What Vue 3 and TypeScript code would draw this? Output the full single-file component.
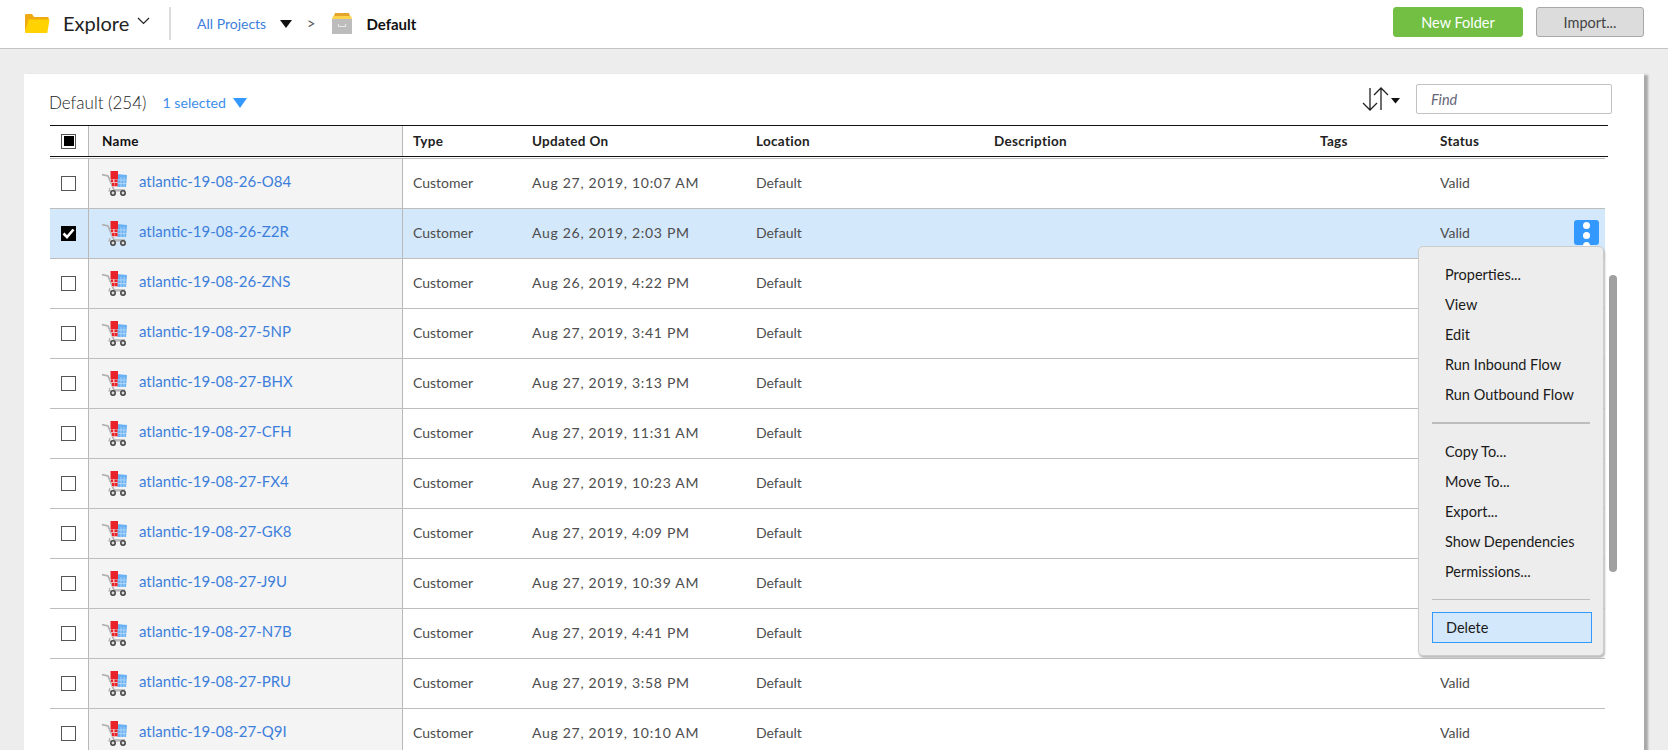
<script setup lang="ts">
interface Row { name: string; updated: string; selected?: boolean; status?: string }
const rows: Row[] = [
  { name: 'atlantic-19-08-26-O84', updated: 'Aug 27, 2019, 10:07 AM', status: 'Valid' },
  { name: 'atlantic-19-08-26-Z2R', updated: 'Aug 26, 2019, 2:03 PM', selected: true, status: 'Valid' },
  { name: 'atlantic-19-08-26-ZNS', updated: 'Aug 26, 2019, 4:22 PM' },
  { name: 'atlantic-19-08-27-5NP', updated: 'Aug 27, 2019, 3:41 PM' },
  { name: 'atlantic-19-08-27-BHX', updated: 'Aug 27, 2019, 3:13 PM' },
  { name: 'atlantic-19-08-27-CFH', updated: 'Aug 27, 2019, 11:31 AM' },
  { name: 'atlantic-19-08-27-FX4', updated: 'Aug 27, 2019, 10:23 AM' },
  { name: 'atlantic-19-08-27-GK8', updated: 'Aug 27, 2019, 4:09 PM' },
  { name: 'atlantic-19-08-27-J9U', updated: 'Aug 27, 2019, 10:39 AM' },
  { name: 'atlantic-19-08-27-N7B', updated: 'Aug 27, 2019, 4:41 PM' },
  { name: 'atlantic-19-08-27-PRU', updated: 'Aug 27, 2019, 3:58 PM', status: 'Valid' },
  { name: 'atlantic-19-08-27-Q9I', updated: 'Aug 27, 2019, 10:10 AM', status: 'Valid' },
]
const menuGroups: string[][] = [
  ['Properties...', 'View', 'Edit', 'Run Inbound Flow', 'Run Outbound Flow'],
  ['Copy To...', 'Move To...', 'Export...', 'Show Dependencies', 'Permissions...'],
]
</script>

<template>
  <div class="page">
    <header class="topbar">
      <svg class="folder" width="26" height="22" viewBox="0 0 26 22">
        <path d="M1 20V3.5C1 2.5 1.6 2 2.5 2H8l2 3h13.5c.8 0 1.2.5 1.2 1.2V8H6z" fill="#eeaa10" />
        <path d="M4.5 7.5H25.5L23.5 20c-.1.7-.6 1-1.2 1H2c-.8 0-1.2-.5-1-1.2z" fill="#ffd200" />
      </svg>
      <span class="explore">Explore</span>
      <svg class="chev" width="13" height="8" viewBox="0 0 13 8"><path d="M1 1l5.5 5.5L12 1" fill="none" stroke="#222" stroke-width="1.2" /></svg>
      <span class="vsep"></span>
      <a class="crumb">All Projects</a>
      <svg class="drop" width="12" height="8" viewBox="0 0 12 8"><path d="M0 0h12L6 8z" fill="#111" /></svg>
      <span class="gt">&gt;</span>
      <svg class="drawer" width="20" height="21" viewBox="0 0 20 21">
        <path d="M3 0h14l1 3H2z" fill="#e3a52c" />
        <path d="M1 3h18l1 3H0z" fill="#fbd44c" />
        <rect x="0" y="6" width="20" height="15" fill="#bcbcbc" />
        <path d="M6.500 11v2.500h7V11" fill="none" stroke="#e6e6e6" stroke-width="1.200" />
      </svg>
      <strong class="current">Default</strong>
      <span class="grow"></span>
      <button class="btn primary">New Folder</button>
      <button class="btn">Import...</button>
    </header>

    <main class="main">
      <section class="panel">
        <div class="toolbar">
          <span class="title">Default (254)</span>
          <a class="selected">1 selected</a>
          <svg class="seltri" width="14" height="10" viewBox="0 0 14 10"><path d="M0 0h14L7 10z" fill="#3399ff" /></svg>
          <span class="grow"></span>
          <svg class="sort" width="38" height="24" viewBox="0 0 38 24">
            <path d="M8 1v22M1 16l7 7 7-7" fill="none" stroke="#222" stroke-width="1.300" />
            <path d="M19 23V1M12 8l7-7 7 7" fill="none" stroke="#222" stroke-width="1.300" />
            <path d="M29 11h9l-4.500 5.500z" fill="#111" />
          </svg>
          <input class="find" placeholder="Find" />
        </div>

        <div class="table">
          <div class="grid head">
            <div class="c-check"><span class="box partial"><i></i></span></div>
            <div class="c-name">Name</div>
            <div class="cell">Type</div>
            <div class="cell">Updated On</div>
            <div class="cell">Location</div>
            <div class="cell">Description</div>
            <div class="cell">Tags</div>
            <div class="cell">Status</div>
          </div>
          <div class="rows">
            <div v-for="r in rows" :key="r.name" class="grid row" :class="{ sel: r.selected }">
              <div class="c-check">
                <span v-if="r.selected" class="box checked">
                  <svg width="13" height="11" viewBox="0 0 13 11"><path d="M1.500 5.500L5 9l6.500-7.500" fill="none" stroke="#fff" stroke-width="2.600" /></svg>
                </span>
                <span v-else class="box"></span>
              </div>
              <div class="c-name">
                <svg class="cart" width="25" height="25" viewBox="0 0 25 25">
                  <path d="M0 3.500l6 1.500 6 14h11" fill="none" stroke="#b0b0b0" stroke-width="1.700" />
                  <path d="M8 17l-1 3h15" fill="none" stroke="#b0b0b0" stroke-width="1.200" />
                  <path d="M15 3l10 1-1 12h-9z" fill="#69b1f3" />
                  <path d="M16 9h8M16 12.500h8M19 6v10M22 6v10" stroke="#b9dbf9" stroke-width=".8" />
                  <rect x="8.500" y="0" width="7.500" height="8" fill="#e8232a" />
                  <path d="M8.500 8h7v8h-5z" fill="#f4b6b6" />
                  <path d="M9 8.500h2v2.500H9zM12.500 8.500h3v2.500h-3zM10 12h2v3h-2zM12.500 12h3v3h-3z" fill="#e8232a" />
                  <circle cx="11" cy="22" r="2.200" fill="#ddd" stroke="#444" stroke-width="1.500" />
                  <circle cx="21" cy="22" r="2.200" fill="#ddd" stroke="#444" stroke-width="1.500" />
                </svg>
                <a class="link">{{ r.name }}</a>
              </div>
              <div class="cell">Customer</div>
              <div class="cell date">{{ r.updated }}</div>
              <div class="cell">Default</div>
              <div class="cell"></div>
              <div class="cell"></div>
              <div class="cell status">
                {{ r.status }}
                <span v-if="r.selected" class="kebab"><b></b><b></b><b></b></span>
              </div>
            </div>
          </div>

          <nav class="menu">
            <template v-for="(group, i) in menuGroups" :key="i">
              <div v-for="item in group" :key="item" class="item">{{ item }}</div>
              <div class="msep" :class="{ thick: i === 0 }"></div>
            </template>
            <div class="item active">Delete</div>
          </nav>
          <div class="scrollthumb"></div>
        </div>
      </section>
    </main>
  </div>
</template>

<style>
html, body { margin: 0; overflow: hidden; height: 750px; background: #ededed; }
</style>

<style scoped>
.page {
  width: 1668px;
  height: 750px;
  overflow: hidden;
  background: #ededed;
  font-family: Lato, "Open Sans", sans-serif;
  font-size: 14px;
  color: #4d4d4d;
}
.topbar {
  background: #fff;
  border-bottom: 1.5px solid #c4c4c4;
  box-sizing: border-box;
  height: 49px;
  display: flex;
  align-items: center;
  padding-left: 24px;
  padding-right: 24px;
}
.folder { margin-top: -3px; }
.explore { font-size: 20px; color: #222; margin-left: 13px; margin-top: -2px; width: 62px; }
.chev { margin-left: 12px; margin-top: -7px; }
.vsep { width: 2px; height: 33px; background: #dcdcdc; margin-left: 19px; margin-top: -2px; }
.crumb { color: #3d7fdb; font-size: 14px; margin-left: 26px; width: 70px; margin-top: -1px; white-space: nowrap; }
.drop { margin-left: 13px; margin-top: 0; }
.gt { margin-left: 15px; font-size: 14.500px; color: #555; margin-top: -2px; }
.drawer { margin-left: 17px; margin-top: -1px; }
.current { margin-left: 14px; color: #111; font-weight: 700; font-size: 15px; margin-top: -1px; }
.grow { flex: 1; }
.btn {
  height: 30px;
  width: 108px;
  margin-top: -5px;
  background: #dcdcdc;
  border: 1px solid #a8a8a8;
  border-radius: 3px;
  font: inherit;
  font-size: 14.500px;
  color: #444;
  padding: 1px 0 0;
}
.btn.primary {
  width: 130px;
  margin-right: 13px;
  background: #72bf44;
  border-color: #72bf44;
  color: #fff;
}
.main { padding: 25px 24px 0; }
.panel {
  position: relative;
  width: 1620px;
  height: 700px;
  background: #fff;
  box-shadow: 4px 1px 2px #a8a8a8;
}
.toolbar {
  height: 51px;
  box-sizing: border-box;
  padding: 11px 32px 6px 25px;
  display: flex;
  align-items: center;
}
.title { font-size: 17px; font-weight: 300; color: #222; margin-top: 1px; }
.selected { color: #3d8fe8; font-size: 14.200px; margin-left: 16px; margin-right: 7px; margin-top: 0; }
.seltri { margin-top: 1px; }
.sort { margin-right: 16px; margin-top: -6px; }
.find {
  width: 196px;
  height: 30px;
  box-sizing: border-box;
  border: 1px solid #c2c2c2;
  border-radius: 2px;
  padding: 0 14px;
  font: italic 14.500px Lato, sans-serif;
  outline: none;
  background: #fff;
  margin-top: -6px;
}
.find::placeholder { color: #667; opacity: 1; }
.table { position: relative; margin-left: 26px; width: 1558px; }
.grid {
  display: grid;
  grid-template-columns: 38px 314px 119px 224px 238px 326px 120px 1fr;
}
.head {
  height: 32px;
  margin-bottom: 1px;
  box-sizing: border-box;
  border-top: 1.500px solid #111;
  border-bottom: 1.500px solid #111;
  color: #111;
  font-weight: 700;
  font-size: 13.500px;
  letter-spacing: .3px;
}
.head .c-name { padding-left: 13px; }
.head .cell { color: #222; }
.c-check { display: flex; align-items: center; justify-content: center; padding-right: 1px; }
.c-name {
  display: flex;
  align-items: center;
  background: #f4f4f4;
  border-left: 1.500px solid #b8b8b8;
  border-right: 1px solid #b8b8b8;
  margin-right: -1px;
  padding-left: 13px;
  box-sizing: border-box;
}
.cell { display: flex; align-items: center; padding-left: 11px; white-space: nowrap; }
.row .cell { padding-bottom: 2px; }
.date { letter-spacing: .7px; }
.rows { width: 1555px; border-top: 1.500px solid #bdbdbd; }
.row { height: 50px; box-sizing: border-box; border-bottom: 1.500px solid #bdbdbd; }
.row.sel, .row.sel .c-name { background: #d4e8fb; }
.box {
  width: 15px;
  height: 15px;
  box-sizing: border-box;
  border: 1.500px solid #555;
  background: #fff;
  display: flex;
  align-items: center;
  justify-content: center;
}
.box.partial i { width: 10px; height: 10px; background: #000; }
.box.checked { background: #000; border-color: #000; }
.cart { flex: none; margin-top: -1px; }
.link { color: #3d7fdb; font-size: 15px; margin-left: 12px; margin-top: -6px; }
.status { position: relative; }
.kebab {
  position: absolute;
  left: 145px;
  top: 11px;
  width: 25px;
  height: 25px;
  border-radius: 3px;
  background: #3399ff;
  display: flex;
  flex-direction: column;
  align-items: center;
  gap: 3px;
  padding-top: 2px;
  box-sizing: border-box;
}
.kebab b { width: 7px; height: 7px; border-radius: 50%; background: #fff; flex: none; }
.menu {
  position: absolute;
  left: 1368px;
  top: 121px;
  width: 186px;
  height: 410px;
  box-sizing: border-box;
  background: #ededed;
  border: 1px solid #ccc;
  border-radius: 5px;
  box-shadow: 1px 2px 2px #bbb;
  padding: 13px 13px 0;
  color: #222;
  z-index: 2;
}
.item {
  height: 30px;
  line-height: 30px;
  padding-left: 13px;
  font-size: 14.500px;
  color: #1a1a1a;
}
.msep { height: 1px; background: #bdbdbd; margin: 12px 0 12px; }
.msep.thick { height: 2px; margin: 12px 0 13px; }
.item.active {
  height: 31px;
  line-height: 29px;
  box-sizing: border-box;
  background: #d4e8fb;
  border: 1px solid #3399ff;
  width: 160px;
}
.scrollthumb {
  position: absolute;
  left: 1559px;
  top: 150px;
  width: 8px;
  height: 297px;
  border-radius: 4px;
  background: #a0a0a0;
}
</style>
